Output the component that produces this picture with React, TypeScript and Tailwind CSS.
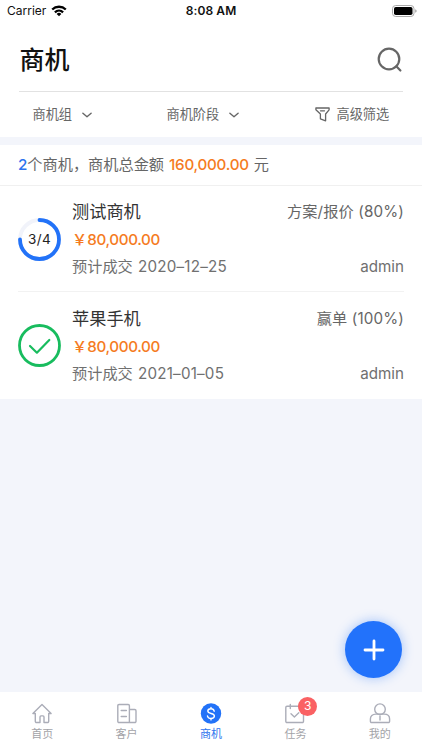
import type { ReactNode } from 'react'

type Deal = {
    name: string
    stage: string
    price: string
    date: string
    owner: string
    badge: ReactNode
}

function ProgressRing() {
    return (
        <div className="relative size-[43px]">
            <svg className="size-full" viewBox="0 0 43 43" fill="none" strokeWidth="3.8">
                <circle cx="21.5" cy="21.5" r="19.5" stroke="#f1f3fa" />
                <path d="M21.5 2a19.5 19.5 0 1 1-19.5 19.5" stroke="#2272f8" strokeLinecap="round" />
            </svg>
            <span className="absolute inset-0 flex items-center justify-center text-[13.5px] tracking-[0.4px] text-[#222]">3/4</span>
        </div>
    )
}

function WonRing() {
    return (
        <svg className="mb-[2px] size-[43px]" viewBox="0 0 43 43" fill="none" stroke="#18bc5e">
            <circle cx="21.5" cy="21.5" r="20" strokeWidth="2.8" />
            <path d="M12 22l6.9 6.7L31.3 16" strokeWidth="2.2" strokeLinecap="round" strokeLinejoin="round" />
        </svg>
    )
}

const deals: Deal[] = [
    { name: '测试商机', stage: '方案/报价 (80%)', price: '80,000.00', date: '2020–12–25', owner: 'admin', badge: <ProgressRing /> },
    { name: '苹果手机', stage: '赢单 (100%)', price: '80,000.00', date: '2021–01–05', owner: 'admin', badge: <WonRing /> },
]

function StatusBar() {
    return (
        <div className="grid h-[22px] grid-cols-3 items-center pl-[7px] pr-[5px] text-[12px] text-[#111]">
            <div className="flex items-center gap-[5px]">
                <span>Carrier</span>
                <svg className="h-[12px] w-[16px]" viewBox="0 0 16 12" fill="none" stroke="#000" strokeWidth="2.3">
                    <path d="M1.2 4.5a9.8 9.8 0 0 1 13.6 0" />
                    <path d="M3.9 7.3a6 6 0 0 1 8.2 0" />
                    <path d="M8 11.2L5.6 8.9a3.5 3.5 0 0 1 4.8 0z" fill="#000" stroke="none" />
                </svg>
            </div>
            <span className="-ml-[2px] text-center font-semibold tracking-[0.1px]">8:08 AM</span>
            <svg className="h-[12px] w-[25px] justify-self-end" viewBox="0 0 25 12">
                <rect x="0.5" y="0.5" width="21.5" height="11" rx="3.2" fill="none" stroke="#aaa" />
                <rect x="2" y="2" width="18.5" height="8" rx="1.8" fill="#000" />
                <path d="M23.4 4.2v3.6c1.5-.6 1.5-3 0-3.6z" fill="#888" />
            </svg>
        </div>
    )
}

function Chevron() {
    return (
        <svg className="h-[6px] w-[10px]" viewBox="0 0 10 6" fill="none" stroke="#666" strokeWidth="1.4" strokeLinecap="round" strokeLinejoin="round">
            <path d="M.9 1.2L5 4.7l4.1-3.5" />
        </svg>
    )
}

function Filters() {
    return (
        <div className="flex h-[45px] items-center pl-[32.5px] pt-[1px] text-[13.2px] text-[#666]">
            <div className="flex w-[134px] items-center gap-[10px]">
                <span>商机组</span>
                <Chevron />
            </div>
            <div className="flex w-[148px] items-center gap-[10px]">
                <span>商机阶段</span>
                <Chevron />
            </div>
            <div className="flex items-center gap-[7px]">
                <svg className="h-[15px] w-[15px]" viewBox="0 0 15 15" fill="none" stroke="#666" strokeWidth="1.3" strokeLinecap="round" strokeLinejoin="round">
                    <path d="M.9 1h13.2v1.8L10.6 7v6.8l-5.2-2V7L.9 2.8z" />
                    <path d="M5.5 3.8h4" />
                </svg>
                <span>高级筛选</span>
            </div>
        </div>
    )
}

function DealRow({ deal }: { deal: Deal }) {
    return (
        <li className="flex h-[106px] items-center gap-[11px] border-b border-[#f2f2f2] pt-[1px] last:h-[107px] last:border-b-0">
            {deal.badge}
            <div className="flex-1 pt-[1px]">
                <div className="flex h-[28px] items-center justify-between">
                    <span className="text-[17.2px] text-[#333]">{deal.name}</span>
                    <span className="text-[15.2px] tracking-[0.15px] text-[#666]">{deal.stage}</span>
                </div>
                <div className="flex h-[28px] items-center text-[15.2px] font-medium text-[#f57b22]">
                    <span>￥</span>
                    <span className="tracking-[-0.35px]">{deal.price}</span>
                </div>
                <div className="flex h-[27px] items-center justify-between text-[15.2px] text-[#707070]">
                    <span>
                        预计成交 <span className="ml-[1px] tracking-[0.2px]">{deal.date}</span>
                    </span>
                    <span>{deal.owner}</span>
                </div>
            </div>
        </li>
    )
}

function TabItem({ label, active, children }: { label: string; active?: boolean; children: ReactNode }) {
    return (
        <div className={active ? 'flex flex-col items-center text-[#2d74ee]' : 'flex flex-col items-center text-[#a3a3a8]'}>
            <div className="relative mt-[10px] h-[22px] w-[22px]">{children}</div>
            <span className="mt-[1px] text-[11px] leading-4">{label}</span>
        </div>
    )
}

function TabIcon({ children }: { children: ReactNode }) {
    return (
        <svg className="size-[22px]" viewBox="0 0 22 22" fill="none" stroke="#abadb8" strokeWidth="1.4" strokeLinecap="round" strokeLinejoin="round">
            {children}
        </svg>
    )
}

function TabBar() {
    return (
        <nav className="grid h-[58px] grid-cols-5 bg-white pt-[1px]">
            <TabItem label="首页">
                <TabIcon>
                    <path d="M4.3 10.5H1.9L11 1.6l9.1 8.9h-2.4v7.8a1.2 1.2 0 0 1-1.2 1.2H13v-5.6a1 1 0 0 0-1-1h-2a1 1 0 0 0-1 1v5.6H5.5a1.2 1.2 0 0 1-1.2-1.2z" />
                </TabIcon>
            </TabItem>
            <TabItem label="客户">
                <TabIcon>
                    <path d="M13.4 19.5H3a1.2 1.2 0 0 1-1.2-1.2V2.7A1.2 1.2 0 0 1 3 1.5h9.2a1.2 1.2 0 0 1 1.2 1.2zM13.4 6.5h5.4A1.2 1.2 0 0 1 20 7.7v10.6a1.2 1.2 0 0 1-1.2 1.2h-5.4" />
                    <path d="M5.2 7.5h5.2M5.2 13.5h5.2" />
                </TabIcon>
            </TabItem>
            <TabItem label="商机" active>
                <svg className="size-[22px]" viewBox="0 0 22 22" fill="none" stroke="#fff" strokeWidth="1.4" strokeLinecap="round">
                    <circle cx="11" cy="10.5" r="10.2" fill="#2272f8" stroke="none" />
                    <path d="M14.2 8.2c-.3-1.6-1.5-2.4-3.2-2.4s-3.2.8-3.2 2.3c0 3.3 6.6 1.6 6.6 5 0 1.5-1.5 2.4-3.4 2.4s-3.3-.8-3.5-2.5M11 4.4v1.4M11 15.5v1.4" />
                </svg>
            </TabItem>
            <TabItem label="任务">
                <TabIcon>
                    <path d="M6.3 3.3H3A1.2 1.2 0 0 0 1.8 4.5v13.8A1.2 1.2 0 0 0 3 19.5h15.3a1.2 1.2 0 0 0 1.2-1.2V4.5a1.2 1.2 0 0 0-1.2-1.2h-12M6.3 1.5v4M15.2 1.5v4M7 10.8l3.4 3.2 4.4-4.2" />
                </TabIcon>
                <span className="absolute -top-[6px] left-[14px] flex size-[18.5px] items-center justify-center rounded-full bg-[#fa6163] text-[12px] text-white">3</span>
            </TabItem>
            <TabItem label="我的">
                <TabIcon>
                    <circle cx="11" cy="6.2" r="5.3" />
                    <path d="M6.8 11.1h8.4c3.4 0 5.4 2 5.4 4.8v2.4a1.2 1.2 0 0 1-1.2 1.2H2.6a1.2 1.2 0 0 1-1.2-1.2v-2.4c0-2.8 2-4.8 5.4-4.8zM11 13v4" />
                </TabIcon>
            </TabItem>
        </nav>
    )
}

export default function App() {
    return (
        <div className="relative flex h-[750px] w-[422px] flex-col overflow-hidden bg-[#f3f5fb] font-['Inter','Noto_Sans_CJK_SC',sans-serif]">
            <header className="bg-white">
                <StatusBar />
                <div className="mx-[19px] flex h-[70px] items-center justify-between border-b border-[#e2e2e2]">
                    <h1 className="ml-[0.5px] mt-[8px] text-[25px] font-medium text-[#111]">商机</h1>
                    <svg className="mt-[6px] size-[26px]" viewBox="0 0 26 26" fill="none" stroke="#666" strokeWidth="2.2" strokeLinecap="round">
                        <circle cx="12" cy="12" r="10.3" />
                        <path d="M19.3 19.3l4.1 4.2" />
                    </svg>
                </div>
                <Filters />
            </header>
            <main className="mt-[8px] bg-white">
                <p className="flex h-[41px] items-center border-b border-[#f0f0f0] pl-[18px] text-[15.2px] text-[#666]">
                    <span className="font-medium text-[#2d74ee]">2</span>
                    <span>个商机，商机总金额</span>
                    <span className="mx-[5px] font-medium tracking-[-0.25px] text-[#f57b22]">160,000.00</span>
                    <span>元</span>
                </p>
                <ul className="px-[18px]">
                    {deals.map((deal) => (
                        <DealRow key={deal.name} deal={deal} />
                    ))}
                </ul>
            </main>
            <div className="mt-auto">
                <TabBar />
            </div>
            <button className="absolute bottom-[72px] right-[20px] flex size-[57px] items-center justify-center rounded-full bg-[#2272fb] shadow-[0_0_12px_rgba(34,114,251,0.4)]">
                <svg className="size-[22px]" viewBox="0 0 22 22" stroke="#fff" strokeWidth="2.8" strokeLinecap="round">
                    <path d="M11 2v18M2 11h18" />
                </svg>
            </button>
        </div>
    )
}
